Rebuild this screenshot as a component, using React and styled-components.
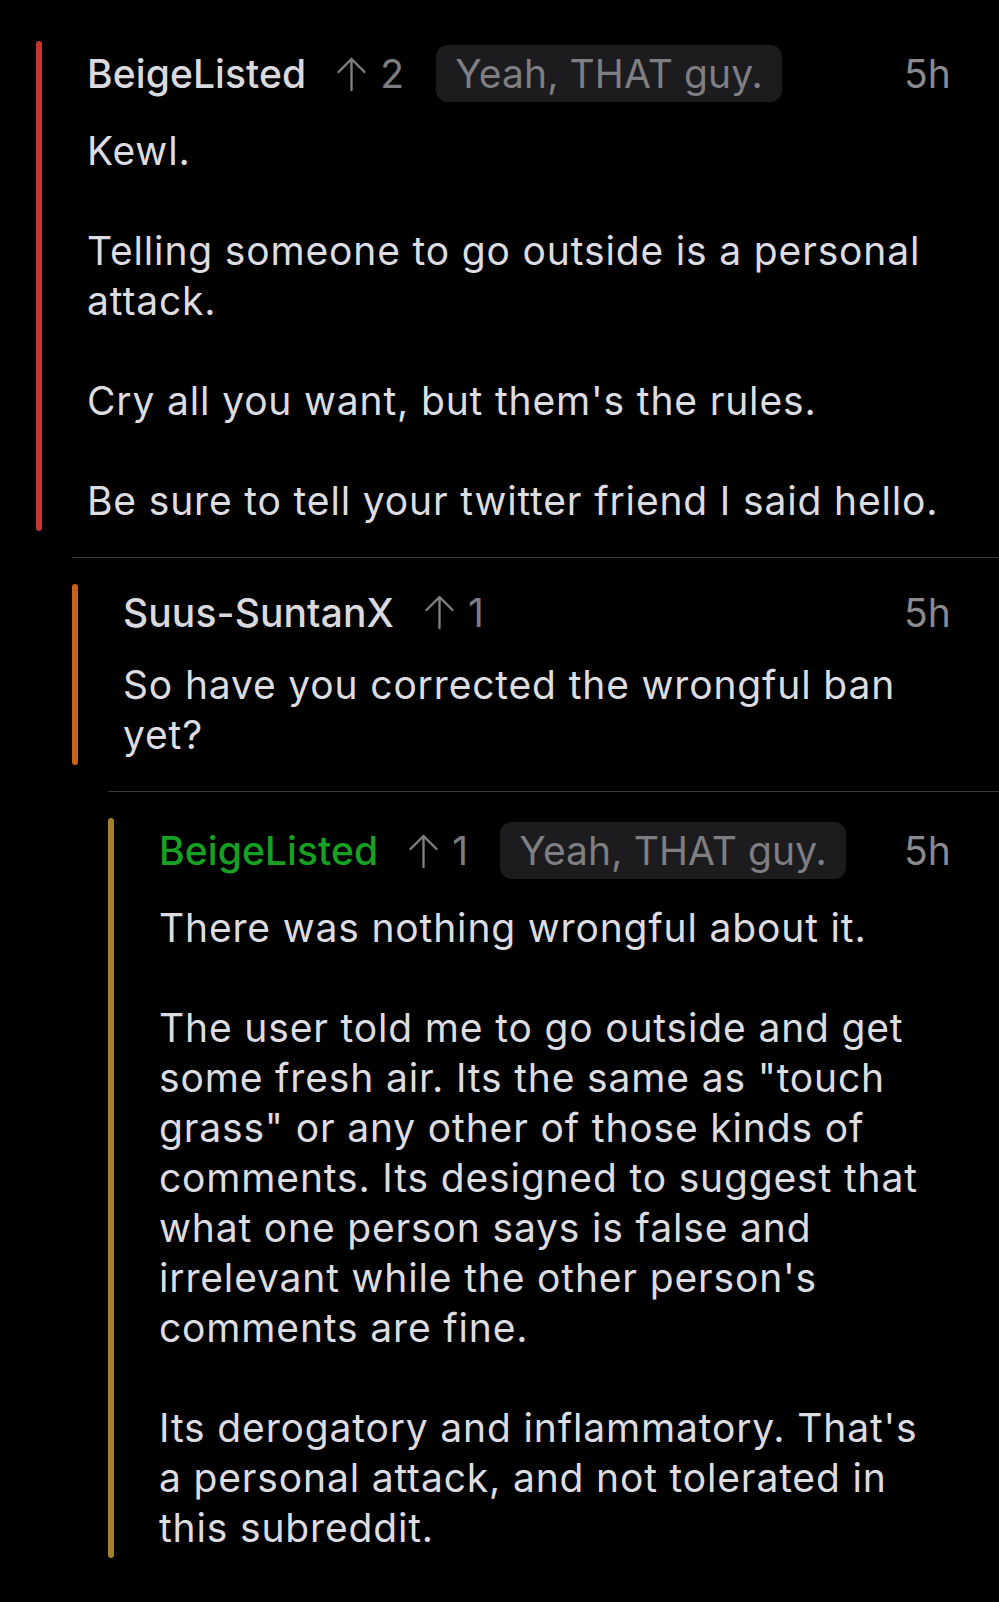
import React from "react";
import styled, { createGlobalStyle } from "styled-components";

const GlobalStyle = createGlobalStyle`
  html, body {
    margin: 0;
    padding: 0;
    background: #000;
  }
  body {
    font-family: Inter, "Noto Sans", "Liberation Sans", sans-serif;
    -webkit-font-smoothing: antialiased;
  }
`;

const thread = {
  id: 1,
  username: "BeigeListed",
  score: 2,
  flair: "Yeah, THAT guy.",
  time: "5h",
  barColor: "#c4362d",
  paragraphs: [
    ["Kewl."],
    ["Telling someone to go outside is a personal attack."],
    ["Cry all you want, but them's the rules."],
    ["Be sure to tell your twitter friend I said hello."],
  ],
  reply: {
    id: 2,
    username: "Suus-SuntanX",
    score: 1,
    time: "5h",
    barColor: "#c9631a",
    paragraphs: [["So have you corrected the wrongful ban yet?"]],
    reply: {
      id: 3,
      username: "BeigeListed",
      isOp: true,
      score: 1,
      flair: "Yeah, THAT guy.",
      time: "5h",
      barColor: "#a5802f",
      paragraphs: [
        ["There was nothing wrongful about it."],
        [
          'The user told me to go outside and get some fresh air. Its the same as "touch grass" or any other of those kinds of comments. Its designed to suggest that what one person says is false and irrelevant while the other person\'s comments are fine.',
        ],
        [
          "Its derogatory and inflammatory. That's a personal attack, and not tolerated in this subreddit.",
        ],
      ],
    },
  },
};

const UpArrow = () => (
  <svg width="31" height="36" viewBox="0 0 31 36" fill="none">
    <path
      d="M15.5 34V3M2.5 16L15.5 3L28.5 16"
      stroke="#7d7d82"
      strokeWidth="2.4"
      strokeLinecap="round"
      strokeLinejoin="round"
    />
  </svg>
);

const Comment = ({ comment, depth }) => {
  return (
    <Block $depth={depth}>
      <Row>
        <Bar $color={comment.barColor} />
        <Content>
          <Header>
            <Username $op={comment.isOp}>{comment.username}</Username>
            <Score>
              <UpArrow />
              <span>{comment.score}</span>
            </Score>
            {comment.flair && <Flair>{comment.flair}</Flair>}
            <Time>{comment.time}</Time>
          </Header>
          <Body>
            {comment.paragraphs.map((p, i) => (
              <p key={i}>{p}</p>
            ))}
          </Body>
        </Content>
      </Row>
      {comment.reply && (
        <Nested>
          <Comment comment={comment.reply} depth={depth + 1} />
        </Nested>
      )}
    </Block>
  );
};

const App = () => {
  return (
    <>
      <GlobalStyle />
      <Page>
        <Comment comment={thread} depth={0} />
      </Page>
    </>
  );
};

export default App;

const Page = styled.div`
  background: #000;
  min-height: 1602px;
  padding-top: 41px;
  padding-left: 36px;
  box-sizing: border-box;
`;

const Block = styled.div`
  display: flex;
  flex-direction: column;
`;

const Nested = styled.div`
  margin-left: 36px;
  margin-top: 26px;
  border-top: 1px solid #38383a;
  padding-top: 26px;
`;

const Row = styled.div`
  display: flex;
  align-items: stretch;
`;

const Bar = styled.div`
  flex: 0 0 6px;
  width: 6px;
  margin-right: 45px;
  border-radius: 3px;
  background: ${(p) => p.$color};
`;

const Content = styled.div`
  flex: 1;
  min-width: 0;
  padding: 4px 48px 5px 0;
`;

const Header = styled.div`
  display: flex;
  align-items: center;
  min-height: 48px;
  font-size: 39px;
  letter-spacing: 0.1px;
`;

const Username = styled.span`
  color: ${(p) => (p.$op ? "#17a021" : "#d9d9de")};
  font-weight: 500;
  margin-right: 30px;
`;

const Score = styled.span`
  display: flex;
  align-items: center;
  gap: 13px;
  color: #7d7d82;
  margin-right: 32px;
`;

const Flair = styled.span`
  display: flex;
  align-items: center;
  height: 57px;
  padding: 0 19px;
  border-radius: 12px;
  background: #1c1c1e;
  color: #7e7e83;
`;

const Time = styled.span`
  margin-left: auto;
  color: #8a8a8e;
`;

const Body = styled.div`
  margin-top: 24px;
  color: #dcdce1;
  font-size: 39px;
  line-height: 50px;
  letter-spacing: 0.84px;

  & p {
    margin: 0;
  }
  & p + p {
    margin-top: 50px;
  }
`;
